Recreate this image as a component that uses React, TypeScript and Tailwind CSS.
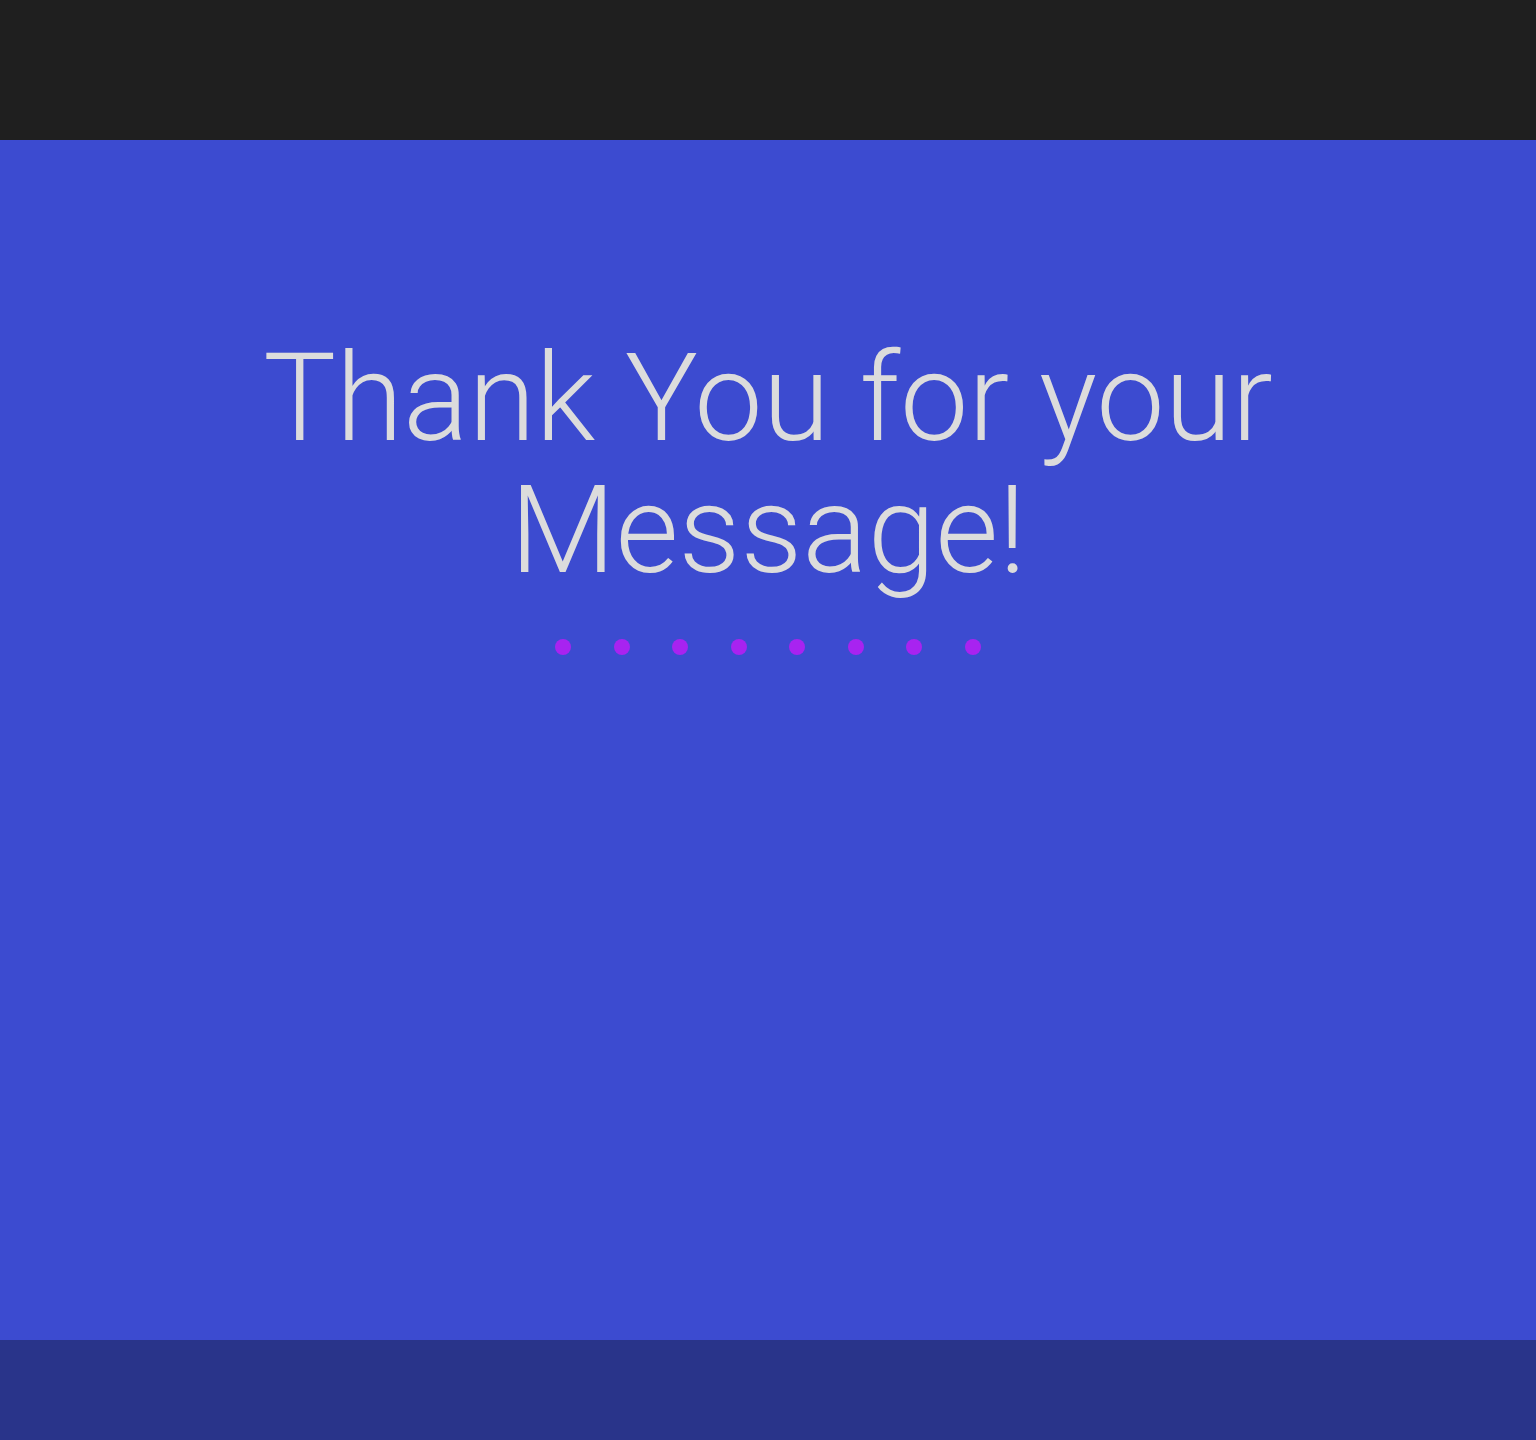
export default function App() {
  const dots = [0, 1, 2, 3, 4, 5, 6, 7];

  return (
    <div className="flex min-h-screen flex-col bg-[#3c4bd0] font-['Roboto','Liberation_Sans',sans-serif]">
      <header className="h-[140px] bg-[#1f1f1f]" />

      <main className="flex h-[1200px] flex-col items-center pt-[193px]">
        <h1 className="text-center text-[122px] font-light leading-[132px] text-[#dcdcdc]">
          Thank You for your
          <br />
          Message!
        </h1>
        <div className="mt-[42px] flex gap-[42.6px]">
          {dots.map((dot) => (
            <span key={dot} className="h-4 w-4 rounded-full bg-[#a823f0]" />
          ))}
        </div>
      </main>

      <footer className="h-[100px] bg-[#29348a]" />
    </div>
  );
}
